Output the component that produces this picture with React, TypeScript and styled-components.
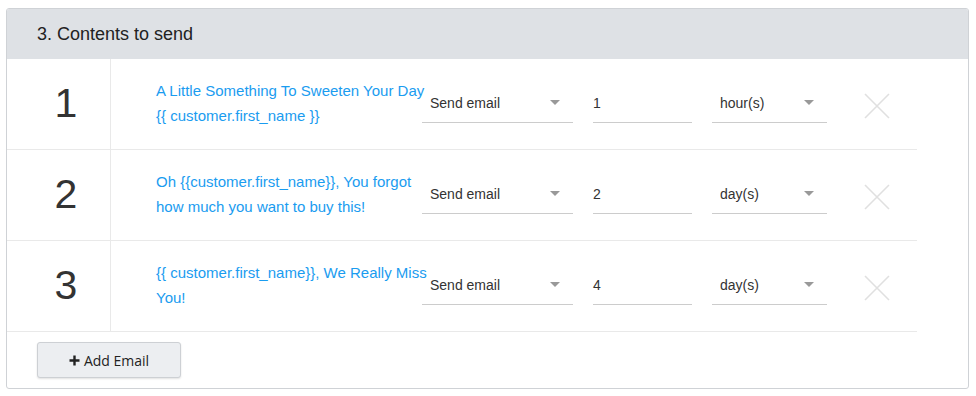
import styled, { createGlobalStyle } from "styled-components";

const GlobalStyle = createGlobalStyle`
  * { box-sizing: border-box; }
  body {
    margin: 0;
    background: #ffffff;
    font-family: "Liberation Sans", Arial, sans-serif;
    color: #333333;
  }
`;

const Page = styled.div`
  padding: 8px 7px 6px 6px;
`;

const Panel = styled.div`
  border: 1px solid #cfd2d6;
  border-radius: 3px;
  overflow: hidden;
  background: #ffffff;
`;

const PanelHeader = styled.div`
  height: 50px;
  background: #dee1e5;
  display: flex;
  align-items: center;
  padding-left: 30px;
  font-size: 18px;
  color: #222222;
`;

const Rows = styled.div`
  width: 910px;
`;

const Row = styled.div`
  display: flex;
  align-items: center;
  height: 91px;
  border-bottom: 1px solid #e9e9e9;
`;

const NumberCell = styled.div`
  width: 104px;
  height: 100%;
  flex-shrink: 0;
  border-right: 1px solid #e9e9e9;
  display: flex;
  align-items: center;
  justify-content: center;
  padding-left: 15px;
  padding-bottom: 2px;
  font-size: 41px;
  color: #333333;
`;

const Subject = styled.div`
  width: 275px;
  flex-shrink: 0;
  margin-left: 45px;
  font-size: 15px;
  line-height: 25px;
  color: #1a9cf0;
  margin-top: -2px;
`;

const Controls = styled.div`
  display: flex;
  align-items: center;
  margin-left: -9px;
  gap: 20px;
`;

const Field = styled.div<{ $w: number; $pad?: number }>`
  width: ${(p) => p.$w}px;
  height: 40px;
  border-bottom: 1px solid #cccccc;
  display: flex;
  align-items: center;
  justify-content: space-between;
  padding-left: ${(p) => p.$pad ?? 0}px;
  padding-right: 13px;
  font-size: 14px;
  color: #333333;
  margin-top: -2px;
`;

const Caret = styled.span`
  width: 0;
  height: 0;
  border-left: 5px solid transparent;
  border-right: 5px solid transparent;
  border-top: 5px solid #999999;
`;

const Remove = styled.button`
  margin-left: 17px;
  width: 26px;
  height: 26px;
  padding: 0;
  border: none;
  background: none;
  display: flex;
  align-items: center;
  justify-content: center;
  margin-top: 4px;
`;

const Footer = styled.div`
  padding: 10px 0 10px 30px;
`;

const AddButton = styled.button`
  width: 144px;
  height: 36px;
  background: #eceef1;
  border: 1px solid #cdd0d4;
  border-radius: 3px;
  box-shadow: 0 1px 2px rgba(0, 0, 0, 0.12);
  font-family: "Open Sans", "Liberation Sans", sans-serif;
  font-size: 14px;
  color: #222222;
  display: flex;
  align-items: center;
  justify-content: center;
  gap: 4px;
`;

type Email = { subject: string; delay: string; unit: string };

const emails: Email[] = [
  { subject: "A Little Something To Sweeten Your Day {{ customer.first_name }}", delay: "1", unit: "hour(s)" },
  { subject: "Oh {{customer.first_name}}, You forgot how much you want to buy this!", delay: "2", unit: "day(s)" },
  { subject: "{{ customer.first_name}}, We Really Miss You!", delay: "4", unit: "day(s)" },
];

const CloseIcon = () => (
  <svg width="26" height="26" viewBox="0 0 26 26">
    <path d="M1 1L25 25M25 1L1 25" stroke="#e0e0e0" strokeWidth="1.6" fill="none" />
  </svg>
);

const PlusIcon = () => (
  <svg width="11" height="11" viewBox="0 0 11 11">
    <path d="M5.5 0.5V10.5M0.5 5.5H10.5" stroke="#222" strokeWidth="2.4" />
  </svg>
);

export default function App() {
  return (
    <Page>
      <GlobalStyle />
      <Panel>
        <PanelHeader>3. Contents to send</PanelHeader>
        <Rows>
          {emails.map((e, i) => (
            <Row key={i}>
              <NumberCell>{i + 1}</NumberCell>
              <Subject>{e.subject}</Subject>
              <Controls>
                <Field $w={151} $pad={8}>
                  <span>Send email</span>
                  <Caret />
                </Field>
                <Field $w={99}>
                  <span>{e.delay}</span>
                </Field>
                <Field $w={115} $pad={8}>
                  <span>{e.unit}</span>
                  <Caret />
                </Field>
                <Remove>
                  <CloseIcon />
                </Remove>
              </Controls>
            </Row>
          ))}
        </Rows>
        <Footer>
          <AddButton>
            <PlusIcon />
            Add Email
          </AddButton>
        </Footer>
      </Panel>
    </Page>
  );
}
